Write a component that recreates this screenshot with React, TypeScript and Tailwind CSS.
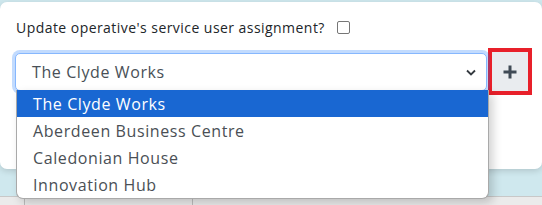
import React from "react";

const options = [
  "The Clyde Works",
  "Aberdeen Business Centre",
  "Caledonian House",
  "Innovation Hub",
];

export default function App() {
  return (
    <div
      className="relative w-[542px] h-[205px] overflow-hidden bg-[#cfe8ee]"
      style={{ fontFamily: '"Open Sans", "Noto Sans", sans-serif' }}
    >
      <div className="pt-[2px]">
        <div className="h-[167px] bg-white rounded-[7px] shadow-[0_2px_6px_rgba(0,0,0,0.15)] pl-[15px] pt-[15px]">
          <div className="flex items-center h-[20px] text-[14px] tracking-[0.45px] text-[#212529]">
            <span className="ml-[1px]">Update operative's service user assignment?</span>
            <span className="ml-[12px] w-[13px] h-[13px] border border-[#767676] rounded-[2px] bg-white" />
          </div>
          <div className="flex items-center mt-[11px]">
            <div className="relative flex items-center w-[472px] h-[38px] border border-[#86b7fe] rounded-[5px] shadow-[0_0_0_3px_rgba(13,110,253,0.25)] bg-white pl-[16px] text-[16px] tracking-[0.6px] text-[#495057]">
              <span>The Clyde Works</span>
              <svg
                className="absolute right-[10px] top-[15px]"
                width="10"
                height="7"
                viewBox="0 0 10 7"
                fill="none"
              >
                <path d="M1 1.5 L5 5.5 L9 1.5" stroke="#343a40" strokeWidth="1.8" />
              </svg>
            </div>
            <div className="ml-[1px] w-[44px] h-[47px] border-[4px] border-[#e8202a] bg-[#e9ecef] flex items-center justify-center">
              <svg width="16" height="16" viewBox="0 0 16 16">
                <path d="M8 1.5 V14.5 M1.5 8 H14.5" stroke="#3f4a55" strokeWidth="3" />
              </svg>
            </div>
          </div>
        </div>
      </div>
      <div className="absolute left-0 right-0 top-[196px] h-[9px] bg-[#ebebeb] border-t border-[#c8c8c8] flex">
        <div className="w-[25px] border-r border-[#bdbdbd]" />
        <div className="w-[168px] border-r border-[#bdbdbd]" />
      </div>
      <div className="absolute left-[16px] top-[90px] w-[473px] bg-white border border-[#a9a9a9] border-t-0 rounded-b-[7px] shadow-[4px_4px_10px_rgba(0,0,0,0.18)] overflow-hidden">
        {options.map((o, i) => (
          <div
            key={o}
            className={
              i === 0
                ? "h-[27px] flex items-center pl-[16px] text-[16px] tracking-[0.6px] bg-[#1967d2] text-white"
                : "h-[27px] flex items-center pl-[16px] text-[16px] tracking-[0.6px] text-[#4a4f55]"
            }
          >
            {o}
          </div>
        ))}
      </div>
    </div>
  );
}
